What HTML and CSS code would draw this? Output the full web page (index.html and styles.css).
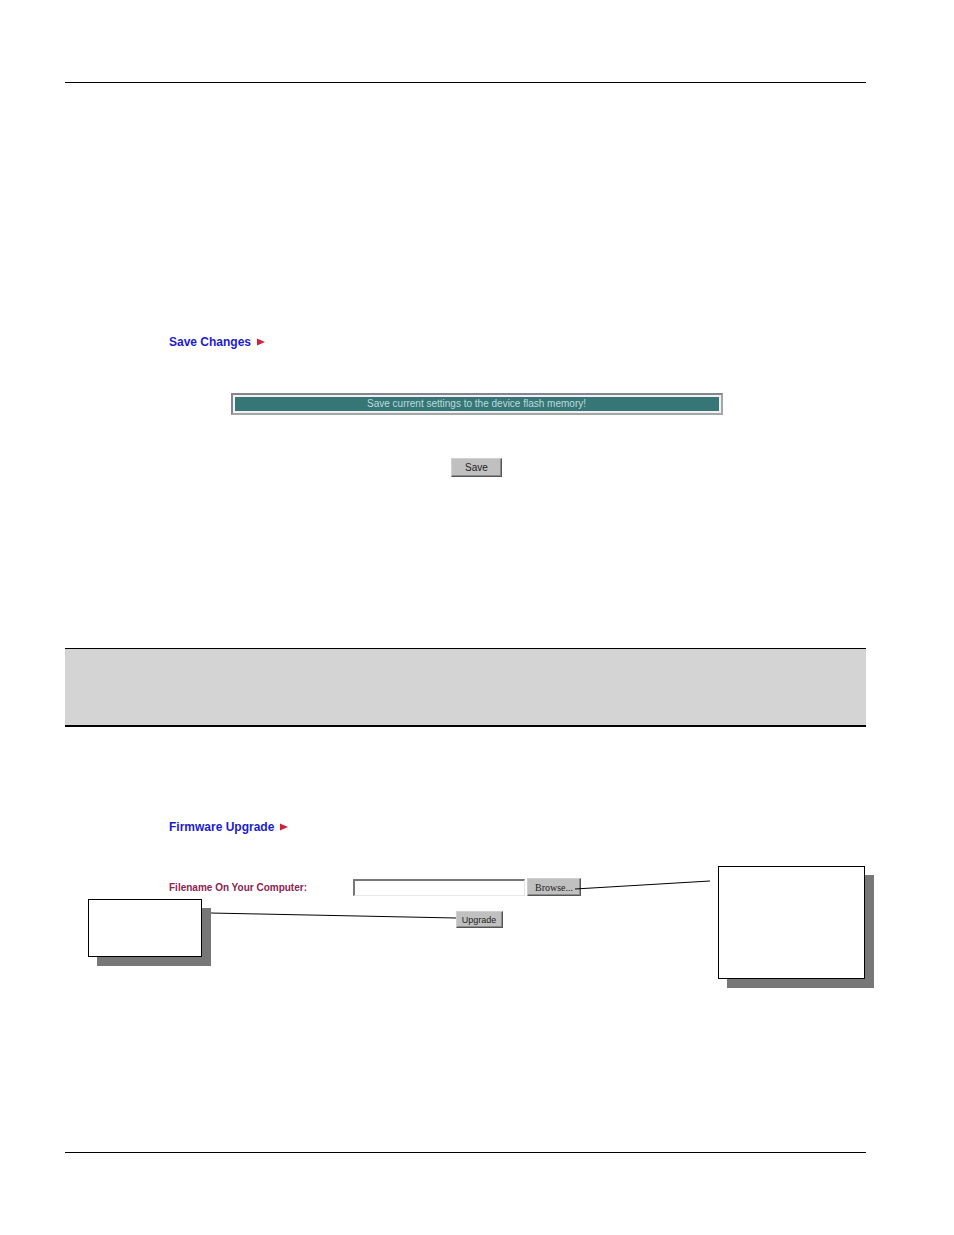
FILE: index.html
```html
<!DOCTYPE html>
<html lang="en">
<head>
<meta charset="utf-8">
<title>Save Changes and Firmware Upgrade</title>
<link rel="stylesheet" href="styles.css">
</head>
<body>
<main class="page">
  <section class="panel save-panel">
    <h2 class="title">Save Changes <svg class="arrow" viewBox="0 0 8 8" aria-hidden="true"><path d="M0 0.5L8 4L0 7.5Z"/></svg></h2>
    <p class="banner"><span class="banner-text">Save current settings to the device flash memory!</span></p>
    <button class="button save-button" type="button">Save</button>
  </section>
  <div class="note"></div>
  <section class="figure">
    <div class="panel upgrade-panel">
      <h2 class="title">Firmware Upgrade <svg class="arrow" viewBox="0 0 8 8" aria-hidden="true"><path d="M0 0.5L8 4L0 7.5Z"/></svg></h2>
      <form class="upgrade-form">
        <label class="file-label" for="filename">Filename On Your Computer:</label>
        <input class="file-input" id="filename" type="text">
        <button class="button browse-button" type="button">Browse...</button>
        <button class="button upgrade-button" type="button">Upgrade</button>
      </form>
    </div>
    <svg class="leaders" width="801" height="260" viewBox="0 0 801 260" aria-hidden="true">
      <path d="M145 186L391 191M510 162L645 154"/>
    </svg>
    <div class="callout callout-left"></div>
    <div class="callout callout-right"></div>
  </section>
</main>
</body>
</html>
```
FILE: styles.css
```css
* {
  box-sizing: border-box;
}

body {
  margin: 0;
  background: #fff;
  font-family: "Liberation Sans", Arial, sans-serif;
}

.page {
  margin: 82px 88px 82px 65px;
  border-top: 1px solid #000;
  border-bottom: 1px solid #000;
}

.panel {
  margin: 0 82px 0 104px;
}

.save-panel {
  display: flex;
  flex-direction: column;
  padding-top: 251px;
}

.title {
  display: flex;
  align-items: center;
  gap: 6px;
  margin: 0;
  font-size: 12px;
  line-height: 16px;
  color: #1c1cd0;
}

.arrow {
  width: 8px;
  height: 8px;
  fill: #d02040;
}

.banner {
  align-self: center;
  width: 80%;
  margin: 43px 0;
  padding: 1px;
  border: 2px solid;
  border-color: #85858b #a5a5a5 #a5a5a5 #85858b;
  background: #eef2f2;
}

.banner-text {
  display: block;
  border: 1px solid #eef2f2;
  background: #377676;
  color: #b9dcda;
  font-size: 10px;
  line-height: 14px;
  text-align: center;
}

.button {
  padding: 0;
  border: 1px solid;
  border-color: #d0d0d0 #555 #555 #d0d0d0;
  box-shadow: inset -1px -1px #8c8c8c;
  background: #c0c0c0;
  color: #222;
  font-family: inherit;
}

.save-button {
  align-self: center;
  width: 51px;
  height: 19px;
  font-size: 10px;
}

.note {
  height: 79px;
  margin-top: 171px;
  border-top: 1px solid #000;
  border-bottom: 2px solid #000;
  background: #d4d4d4;
}

.figure {
  position: relative;
  padding: 92px 0 224px;
}

.upgrade-form {
  display: grid;
  grid-template-columns: 182px 172px 54px;
  column-gap: 2px;
  row-gap: 15px;
  align-items: center;
  margin-top: 43px;
}

.file-label {
  font-size: 10px;
  font-weight: bold;
  color: #8c2450;
}

.file-input {
  width: 100%;
  height: 17px;
  padding: 0 2px;
  border: 1px solid;
  border-width: 2px 1px 1px 2px;
  border-color: #777 #e8e8e8 #e8e8e8 #777;
  background: #fff;
  font: 11px "Liberation Sans", Arial, sans-serif;
}

.browse-button {
  height: 18px;
  font-family: "Liberation Serif", "Times New Roman", serif;
  font-size: 10px;
}

.upgrade-button {
  grid-column: 2;
  justify-self: center;
  width: 47px;
  height: 17px;
  margin-left: 80px;
  font-size: 9px;
}

.leaders {
  position: absolute;
  top: 0;
  left: 0;
  fill: none;
  stroke: #000;
  pointer-events: none;
}

.callout {
  position: absolute;
  border: 1px solid #000;
  background: #fff;
  box-shadow: 9px 9px #777;
}

.callout-left {
  top: 172px;
  left: 23px;
  width: 114px;
  height: 58px;
}

.callout-right {
  top: 139px;
  right: 1px;
  width: 147px;
  height: 113px;
}
```
